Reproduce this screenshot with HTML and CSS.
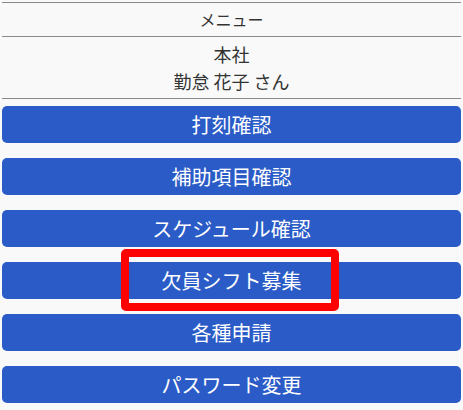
FILE: index.html
```html
<!DOCTYPE html>
<html lang="ja">
<head>
<meta charset="utf-8">
<link rel="stylesheet" href="styles.css">
</head>
<body>
<div class="page">
  <div class="title">メニュー</div>
  <div class="user">
    <div>本社</div>
    <div>勤怠 花子 さん</div>
  </div>
  <ul class="menu">
    <li class="btn">打刻確認</li>
    <li class="btn">補助項目確認</li>
    <li class="btn">スケジュール確認</li>
    <li class="btn marked">欠員シフト募集<span class="highlight"></span></li>
    <li class="btn">各種申請</li>
    <li class="btn">パスワード変更</li>
  </ul>
</div>
</body>
</html>
```
FILE: styles.css
```css
html, body {
  margin: 0;
  padding: 0;
  background: #f9f9f9;
}
body {
  font-family: "Noto Sans CJK JP", "Noto Sans", sans-serif;
  color: #333;
}
.page {
  padding: 2px 2px 0 2px;
}
.title {
  border-top: 1px solid #8a8a8a;
  border-bottom: 1px solid #8a8a8a;
  height: 33px;
  line-height: 33px;
  text-align: center;
  font-size: 16px;
}
.user {
  border-bottom: 1px solid #8a8a8a;
  height: 61px;
  display: flex;
  flex-direction: column;
  justify-content: center;
  text-align: center;
  font-size: 18px;
  line-height: 27px;
}
.menu {
  list-style: none;
  margin: 7px 0 0 0;
  padding: 0;
  display: flex;
  flex-direction: column;
  gap: 15px;
}
.btn {
  height: 37px;
  line-height: 37px;
  background: #2a5bc7;
  color: #fff;
  border-radius: 5px;
  text-align: center;
  font-size: 20px;
}
.marked {
  position: relative;
}
.highlight {
  position: absolute;
  left: 119px;
  top: -13px;
  width: 202px;
  height: 46px;
  border: 8px solid #ff0000;
  border-radius: 5px;
}
```
